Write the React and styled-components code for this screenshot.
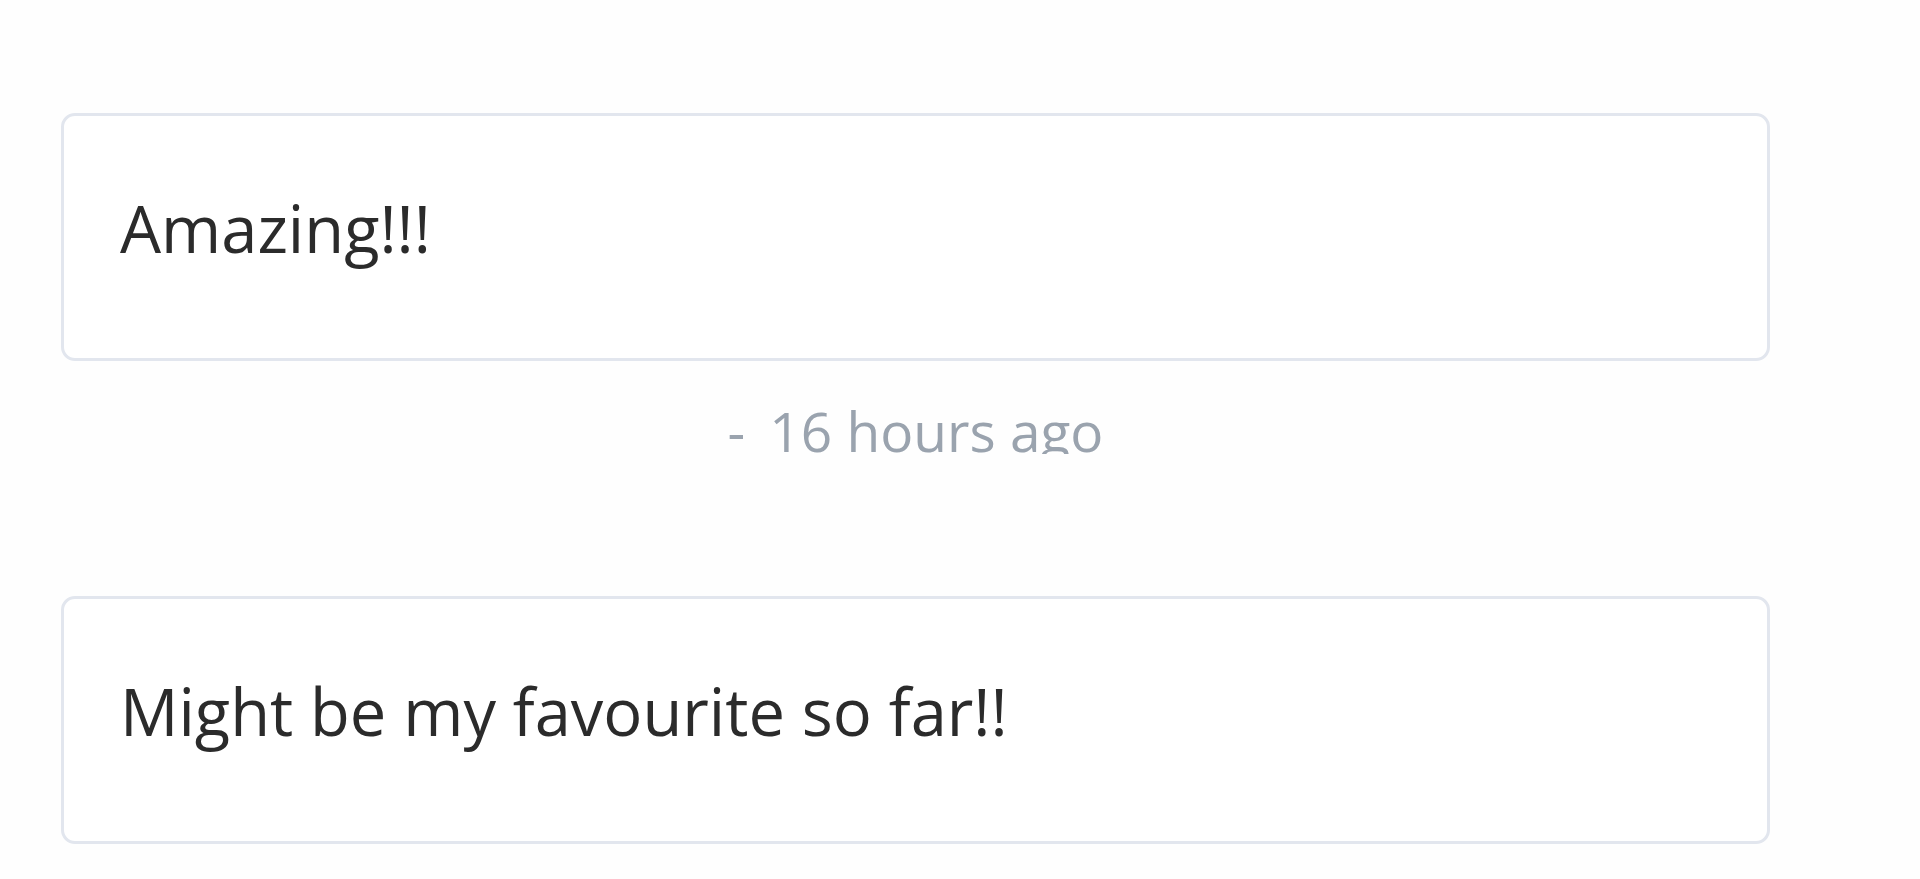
import React from 'react';
import styled, { createGlobalStyle } from 'styled-components';

const GlobalStyle = createGlobalStyle`
  body {
    margin: 0;
    background: #fefefe;
    font-family: "Open Sans", "Noto Sans", sans-serif;
  }
`;

const Feed = styled.div`
  display: flex;
  flex-direction: column;
  width: 1709px;
  padding: 113px 0 0 61px;
`;

const CommentCard = styled.div`
  box-sizing: border-box;
  height: 248px;
  border: 3px solid #e2e6ee;
  border-radius: 14px;
  background: #ffffff;
  padding: 68px 56px 0;
`;

const CommentText = styled.p`
  margin: 0;
  font-size: 65px;
  line-height: normal;
  color: #2b2b2b;
`;

const Stamp = styled.div`
  display: flex;
  justify-content: center;
  height: 61px;
  margin: 32px 0 ${(p) => p.$after}px;
  overflow: hidden;
  font-size: 55px;
  line-height: normal;
  color: #9aa3ae;
`;

const Dash = styled.span`
  margin-right: 24px;
`;

const comments = [
  { id: 1, text: 'Amazing!!!', ago: '16 hours ago' },
  { id: 2, text: 'Might be my favourite so far!!' },
];

const App = () => {
  return (
    <>
      <GlobalStyle />
      <Feed>
        {comments.map((c) => (
          <React.Fragment key={c.id}>
            <CommentCard>
              <CommentText>{c.text}</CommentText>
            </CommentCard>
            {c.ago && (
              <Stamp $after={142}>
                <Dash>-</Dash>
                {c.ago}
              </Stamp>
            )}
          </React.Fragment>
        ))}
      </Feed>
    </>
  );
};

export default App;
